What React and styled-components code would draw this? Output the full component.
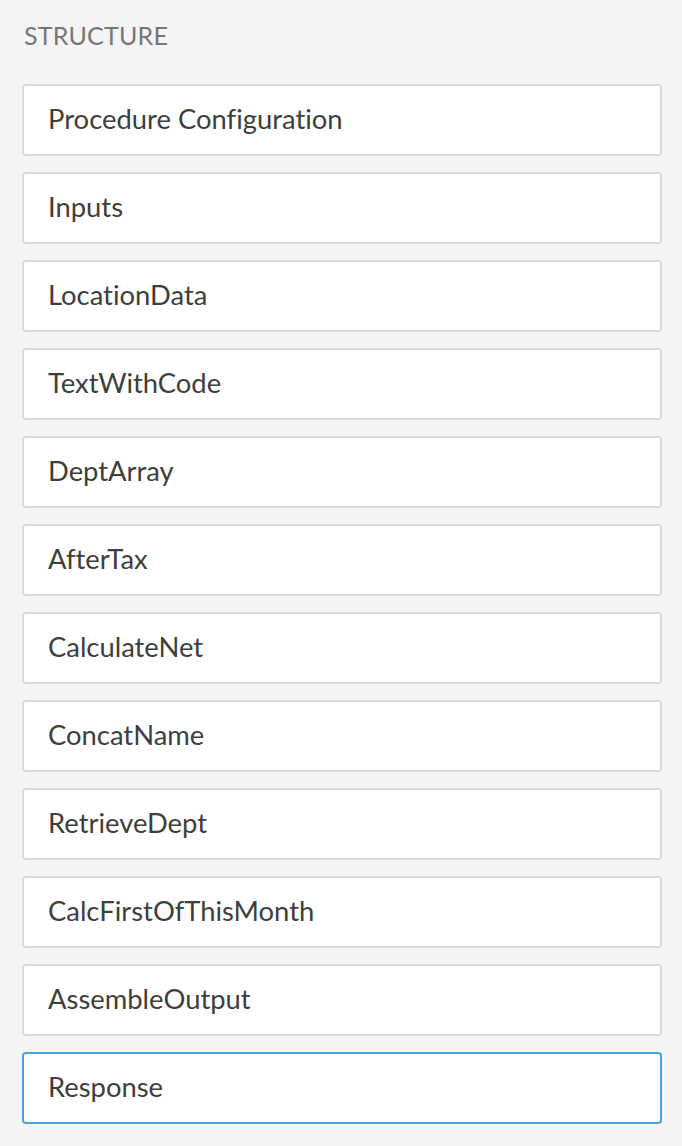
import styled, { createGlobalStyle } from "styled-components";

const steps = [
  "Procedure Configuration",
  "Inputs",
  "LocationData",
  "TextWithCode",
  "DeptArray",
  "AfterTax",
  "CalculateNet",
  "ConcatName",
  "RetrieveDept",
  "CalcFirstOfThisMonth",
  "AssembleOutput",
  "Response",
];

function App() {
  const selected = "Response";

  return (
    <>
      <GlobalStyle />
      <Panel>
        <Heading>STRUCTURE</Heading>
        <StepList>
          {steps.map((name) => (
            <StepCard key={name} $active={name === selected}>
              {name}
            </StepCard>
          ))}
        </StepList>
      </Panel>
    </>
  );
}

export default App;

const GlobalStyle = createGlobalStyle`
  html, body {
    margin: 0;
    padding: 0;
    background: #f4f4f4;
  }
  * {
    box-sizing: border-box;
  }
`;

const Panel = styled.div`
  width: 682px;
  min-height: 1146px;
  padding: 20px 20px 23px 22px;
  background: #f4f4f4;
  font-family: Lato, "Open Sans", sans-serif;
  font-variant-ligatures: none;
`;

const Heading = styled.h2`
  margin: 0 0 0 2px;
  font-size: 25px;
  font-weight: 400;
  line-height: 30px;
  color: #777777;
  letter-spacing: 0.2px;
`;

const StepList = styled.div`
  display: flex;
  flex-direction: column;
  gap: 16px;
  margin-top: 34px;
`;

const StepCard = styled.div`
  display: flex;
  align-items: center;
  height: 72px;
  padding: 0 24px 3px;
  background: #ffffff;
  border: 2px solid ${(p) => (p.$active ? "#4aa3db" : "#d9d9d9")};
  border-radius: 4px;
  font-size: 27.4px;
  color: #3e3e3c;
  cursor: pointer;
`;
